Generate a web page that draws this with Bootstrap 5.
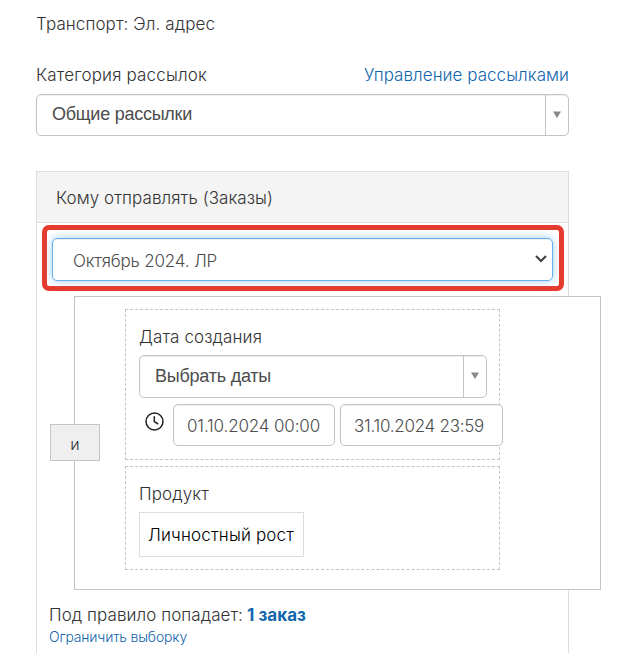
<!DOCTYPE html>
<html lang="ru">
<head>
<meta charset="utf-8">
<meta name="viewport" content="width=device-width, initial-scale=1">
<title>Рассылка</title>
<link href="https://cdn.jsdelivr.net/npm/bootstrap@5.3.0/dist/css/bootstrap.min.css" rel="stylesheet">
<style>
body{font-family:Inter,"Open Sans",sans-serif;font-weight:300;font-size:17px;line-height:24px;color:#333;height:653px;overflow:hidden;background:#fff}
.page{width:533px;margin-left:36px;padding-top:12px;height:653px}
a{color:#1266ae;text-decoration:none}
.t{white-space:nowrap;display:inline-block}
.label-row{margin-top:27px}
.combo{height:42px;margin-top:7px;border:1px solid #c4c4c4;border-radius:5px;background:#fff;box-shadow:inset 0 1px 1px rgba(0,0,0,.075);font-family:"Liberation Sans",Arial,sans-serif;font-weight:400;font-size:18px;color:#4c4c4c}
.combo-text{padding:7px 15px 0}
.combo-arrow{width:23px;border-left:1px solid #c4c4c4;padding:0 1px 2px 0}
.rule .combo{margin-top:6px;height:43px}
.rule .combo-text{padding-top:8px}
.panel-box{margin-top:35px;height:500px;border:1px solid #ddd}
.panel-head{height:51px;background:#f4f4f4;border-bottom:1px solid #ddd;padding:1px 19px 0}
.mark-frame{margin:2px 4px 0 5px;height:66px;border:5px solid #e53b2f;border-radius:7px;padding:8px 6px 0 5px}
.pick{height:43px;border:1px solid #66afe9;border-radius:5px;box-shadow:inset 0 1px 1px rgba(0,0,0,.075),0 0 8px rgba(102,175,233,.6);padding:2px 5px 0 20px;color:#4c4c4c}
.pick svg{margin-bottom:3px}
.rules{margin:5px 0 0 37px;width:527px;height:294px;border:1px solid #c4c4c4;background:#fff;padding:12px 0 0 50px}
.rule{width:375px;border:1px dashed #c4c4c4;padding:15px 12px 0 13px}
.r1{height:151px}
.r2{height:104px;margin-top:6px}
.dates{margin-top:6px}
.clock{margin:8px 9px 0 6px}
.date-in{width:162px;height:42px;border:1px solid #c4c4c4;border-radius:5px;background:#fff;box-shadow:inset 0 1px 1px rgba(0,0,0,.075);color:#4c4c4c;padding:1px 0 0 13px}
.date-to{width:163px;margin-left:5px}
.join-op{left:-25px;top:127px;width:50px;height:37px;background:#efefef;border:1px solid #c4c4c4;padding-top:2px;font-size:16px}
.prod{width:165px;height:45px;border:1px solid #ddd;color:#000;margin-top:6px;padding-left:8px}
.foot{padding:13px 0 0 12px}
.foot-sm{font-size:14px;line-height:20px}
</style>
<script src="https://cdn.jsdelivr.net/npm/bootstrap@5.3.0/dist/js/bootstrap.bundle.min.js"></script>
</head>
<body>
<main class="page">
  <div><span class="t t1">Транспорт: Эл. адрес</span></div>
  <div class="label-row d-flex justify-content-between">
    <span class="t t2">Категория рассылок</span><a href="#" class="t t3">Управление рассылками</a>
  </div>
  <div class="combo d-flex">
    <div class="combo-text flex-grow-1"><span class="t t4">Общие рассылки</span></div>
    <div class="combo-arrow d-flex align-items-center justify-content-center"><svg width="8" height="7" viewBox="0 0 8 7"><path d="M0 .5h8L4 7z" fill="#888"/></svg></div>
  </div>
  <section class="panel-box">
    <div class="panel-head d-flex align-items-center"><span class="t t5">Кому отправлять (Заказы)</span></div>
    <div class="mark-frame">
      <div class="pick d-flex align-items-center justify-content-between">
        <span class="t t6">Октябрь 2024. ЛР</span>
        <svg width="12" height="8" viewBox="0 0 12 8"><path d="M1 1l5 5 5-5" fill="none" stroke="#444" stroke-width="2.2"/></svg>
      </div>
    </div>
    <div class="rules position-relative">
      <div class="join-op position-absolute d-flex align-items-center justify-content-center">и</div>
      <div class="rule r1">
        <div><span class="t t7">Дата создания</span></div>
        <div class="combo d-flex">
          <div class="combo-text flex-grow-1"><span class="t t8">Выбрать даты</span></div>
          <div class="combo-arrow d-flex align-items-center justify-content-center"><svg width="8" height="7" viewBox="0 0 8 7"><path d="M0 .5h8L4 7z" fill="#888"/></svg></div>
        </div>
        <div class="dates d-flex">
          <svg class="clock flex-shrink-0" width="19" height="19" viewBox="0 0 19 19" fill="none" stroke="#222" stroke-width="1.5"><circle cx="9.5" cy="9.5" r="8.5"/><path d="M9.3 4.2v5.4l3.8 2.4"/></svg>
          <div class="date-in d-flex align-items-center flex-shrink-0"><span class="t t9">01.10.2024 00:00</span></div>
          <div class="date-in date-to d-flex align-items-center flex-shrink-0 position-relative"><span class="t t10">31.10.2024 23:59</span></div>
        </div>
      </div>
      <div class="rule r2">
        <div><span class="t t11">Продукт</span></div>
        <div class="prod d-flex align-items-center"><span class="t t12">Личностный рост</span></div>
      </div>
    </div>
    <div class="foot">
      <div class="d-flex"><span class="t t13">Под правило попадает:</span><a href="#" class="t t14 fw-bold ms-1">1 заказ</a></div>
      <div class="foot-sm"><a href="#" class="t t15">Ограничить выборку</a></div>
    </div>
  </section>
</main>
<script>
// Tune tracking so each label keeps its designed width.
const widths={t1:179,t2:171,t3:205,t4:140,t5:217,t6:144,t7:123,t8:116,t9:133,t10:130,t11:70,t12:146,t13:194,t14:59,t15:138};
for(const k in widths){const e=document.querySelector('.'+k);const w=e.getBoundingClientRect().width;e.style.letterSpacing=((widths[k]-w)/e.textContent.length)+'px';}
</script>
</body>
</html>
